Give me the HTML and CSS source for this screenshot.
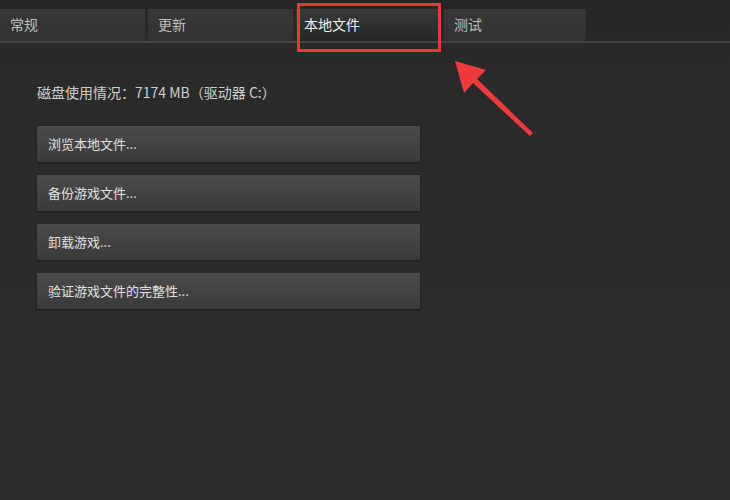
FILE: index.html
```html
<!DOCTYPE html>
<html lang="zh-CN">
<head>
    <meta charset="UTF-8">
    <title>属性 - 本地文件</title>
    <link rel="stylesheet" href="styles.css">
</head>
<body>
    <div class="window">
        <div class="tabs">
            <div class="tab">常规</div>
            <div class="tab">更新</div>
            <div class="tab active">本地文件</div>
            <div class="tab">测试</div>
        </div>

        <div class="content">
            <p class="disk">磁盘使用情况：7174 MB（驱动器 C:）</p>
            <div class="btn">浏览本地文件...</div>
            <div class="btn">备份游戏文件...</div>
            <div class="btn">卸载游戏...</div>
            <div class="btn">验证游戏文件的完整性...</div>
        </div>

        <div class="mark-box"></div>
        <svg class="arrow" width="100" height="90" viewBox="0 0 100 90">
            <polygon points="4,5 35,14 26,23 82,77 79,80 22,27 13,37" fill="#f03a3a"/>
        </svg>
    </div>
</body>
</html>
```

FILE: styles.css
```css
body {
    margin: 0;
    background-color: #2d2d2d;
    font-family: "Noto Sans CJK SC", "Liberation Sans", sans-serif;
    color: #c8c8c8;
}
.window {
    position: relative;
    width: 730px;
    height: 500px;
    overflow: hidden;
    background: linear-gradient(#262626 0, #2a2a2a 60px, #2e2e2e 500px);
}
.tabs {
    display: flex;
    gap: 3px;
    padding-top: 9px;
    height: 32px;
    border-bottom: 2px solid #454545;
}
.tab {
    width: 145px;
    box-sizing: border-box;
    padding: 5px 0 0 10px;
    font-size: 14px;
    line-height: 20px;
    color: #bdbdbd;
    background: linear-gradient(#383838, #323232);
}
.tab:last-child {
    width: 142px;
}
.tab.active {
    padding-left: 8px;
    color: #f0f0f0;
    background: linear-gradient(#3a3a3a, #252525);
}
.content {
    padding: 37px 0 0 37px;
}
.disk {
    margin: 0 0 22px;
    font-size: 14px;
    line-height: 24px;
    color: #cfcfcf;
}
.btn {
    width: 383px;
    height: 36px;
    box-sizing: border-box;
    padding-left: 11px;
    margin-bottom: 13px;
    font-size: 13px;
    line-height: 36px;
    color: #e0e0e0;
    background: linear-gradient(#4a4a4a, #3a3a3a);
    box-shadow: 0 1px 2px rgba(0,0,0,0.4);
}
.mark-box {
    position: absolute;
    left: 297px;
    top: 3px;
    width: 138px;
    height: 43px;
    border: 3px solid #ee3535;
}
.arrow {
    position: absolute;
    left: 451px;
    top: 56px;
}
```
